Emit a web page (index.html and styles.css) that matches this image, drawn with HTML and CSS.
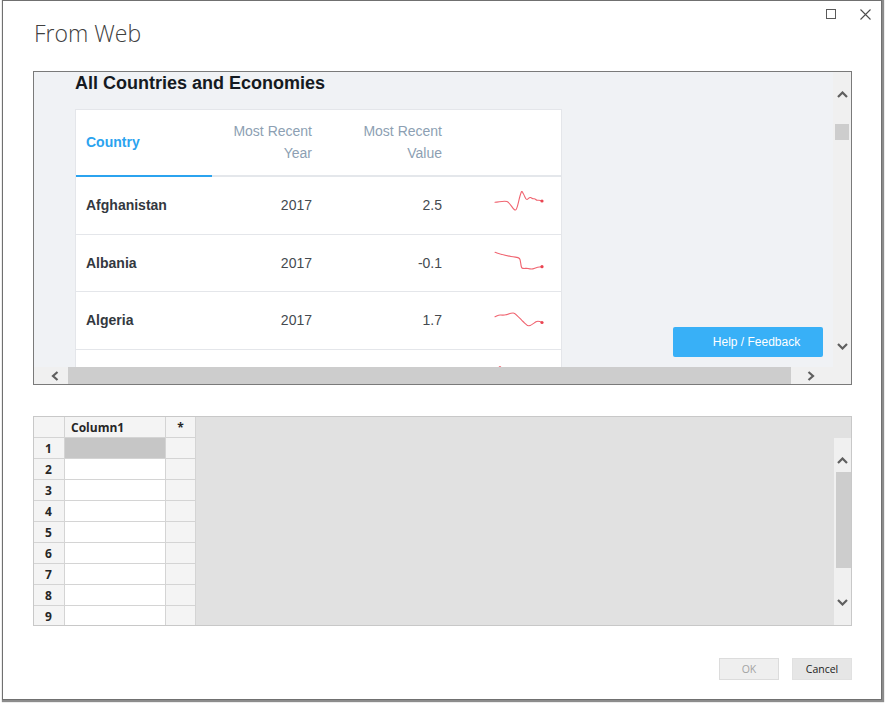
FILE: index.html
```html
<!DOCTYPE html>
<html lang="en">
<head>
<meta charset="utf-8">
<title>From Web</title>
<link rel="stylesheet" href="styles.css">
</head>
<body>
<div class="window">
  <header class="titlebar">
    <h1 class="title">From Web</h1>
    <div class="controls">
      <svg class="ctl" width="10" height="10" viewBox="0 0 10 10"><rect x="0.5" y="0.5" width="9" height="9" fill="none" stroke="#5a5a5a" stroke-width="1"/></svg>
      <svg class="ctl" width="11" height="11" viewBox="0 0 11 11"><path d="M0.5 0.5 L10.5 10.5 M10.5 0.5 L0.5 10.5" fill="none" stroke="#4d4d4d" stroke-width="1.1"/></svg>
    </div>
  </header>

  <div class="content">
    <section class="browser">
      <div class="page">
        <h2 class="page-title">All Countries and Economies</h2>
        <div class="card">
          <div class="trow thead">
            <div class="c-country active">Country</div>
            <div class="c-year">Most Recent<br>Year</div>
            <div class="c-value">Most Recent<br>Value</div>
            <div class="c-spark"></div>
          </div>
          <div class="trow">
            <div class="c-country name">Afghanistan</div>
            <div class="c-year">2017</div>
            <div class="c-value">2.5</div>
            <div class="c-spark">
              <svg width="52" height="30" viewBox="0 0 52 30"><path d="M0,12.3 C5,11.8 9,10.5 12,11.5 S17,18 19.5,19.8 S23,13 25,6 S27,1.5 28.5,4 S30.5,10 32,9.5 S34,7 35.5,7.5 S37.5,9 39,8.7 S41,10.5 42.5,10.3 S45,10 47,11"/><circle cx="47" cy="11" r="1.6"/></svg>
            </div>
          </div>
          <div class="trow">
            <div class="c-country name">Albania</div>
            <div class="c-year">2017</div>
            <div class="c-value">-0.1</div>
            <div class="c-spark">
              <svg width="52" height="30" viewBox="0 0 52 30"><path d="M0,4.3 C4,5.5 10,7.5 16,8.5 S23,9 24.5,10.5 S25.5,19 27,20 S31,20 33,20.5 S37,21.5 39,20.5 S43,18.5 47,18.7"/><circle cx="47" cy="18.7" r="1.6"/></svg>
            </div>
          </div>
          <div class="trow">
            <div class="c-country name">Algeria</div>
            <div class="c-year">2017</div>
            <div class="c-value">1.7</div>
            <div class="c-spark">
              <svg width="52" height="30" viewBox="0 0 52 30"><path d="M0,11.8 C2,11 3.5,9.8 5.5,10 S9,10.3 11,9.8 S17,7.5 19,8.2 S25,13.5 28,16.5 S32,21 34,20.8 S39,18 41,16.8 S45,16.5 47,17.5"/><circle cx="47" cy="17.5" r="1.6"/></svg>
            </div>
          </div>
          <div class="trow">
            <div class="c-country name"></div>
            <div class="c-year"></div>
            <div class="c-value"></div>
            <div class="c-spark">
              <svg width="52" height="30" viewBox="0 0 52 30"><path d="M0,9 C2,7 4,3.5 5,3.5 S8,8 10,10 S20,14 30,15 S42,16 47,15"/><circle cx="47" cy="15" r="1.6"/></svg>
            </div>
          </div>
        </div>
        <button class="help">Help / Feedback</button>
      </div>
      <div class="vscroll">
        <div class="v-up"><svg width="11" height="7" viewBox="0 0 11 7"><polyline points="1,6 5.5,1.5 10,6"/></svg></div>
        <div class="v-thumb"></div>
        <div class="v-fill"></div>
        <div class="v-down"><svg width="11" height="7" viewBox="0 0 11 7"><polyline points="1,1 5.5,5.5 10,1"/></svg></div>
      </div>
      <div class="hscroll">
        <div class="h-left"><svg width="8" height="10" viewBox="0 0 8 10"><polyline points="6.5,1 2,5 6.5,9"/></svg></div>
        <div class="h-thumb"></div>
        <div class="h-right"><svg width="8" height="10" viewBox="0 0 8 10"><polyline points="1.5,1 6,5 1.5,9"/></svg></div>
      </div>
      <div class="corner"></div>
    </section>

    <section class="sheet">
      <div class="sheet-table">
        <div class="srow">
          <div class="s-num"></div><div class="s-col">Column1</div><div class="s-star">*</div>
        </div>
        <div class="srow"><div class="s-num">1</div><div class="s-col selected"></div><div class="s-star"></div></div>
        <div class="srow"><div class="s-num">2</div><div class="s-col"></div><div class="s-star"></div></div>
        <div class="srow"><div class="s-num">3</div><div class="s-col"></div><div class="s-star"></div></div>
        <div class="srow"><div class="s-num">4</div><div class="s-col"></div><div class="s-star"></div></div>
        <div class="srow"><div class="s-num">5</div><div class="s-col"></div><div class="s-star"></div></div>
        <div class="srow"><div class="s-num">6</div><div class="s-col"></div><div class="s-star"></div></div>
        <div class="srow"><div class="s-num">7</div><div class="s-col"></div><div class="s-star"></div></div>
        <div class="srow"><div class="s-num">8</div><div class="s-col"></div><div class="s-star"></div></div>
        <div class="srow"><div class="s-num">9</div><div class="s-col"></div><div class="s-star"></div></div>
      </div>
      <div class="sheet-fill"></div>
      <div class="sheet-scroll">
        <div class="ss-up"><svg width="11" height="7" viewBox="0 0 11 7"><polyline points="1,6 5.5,1.5 10,6"/></svg></div>
        <div class="ss-thumb"></div>
        <div class="ss-fill"></div>
        <div class="ss-down"><svg width="11" height="7" viewBox="0 0 11 7"><polyline points="1,1 5.5,5.5 10,1"/></svg></div>
      </div>
    </section>

    <div class="actions">
      <button class="btn btn-ok" disabled>OK</button>
      <button class="btn btn-cancel">Cancel</button>
    </div>
  </div>
</div>
</body>
</html>
```

FILE: styles.css
```css
* { box-sizing: border-box; }

html, body {
  margin: 0;
  padding: 0;
  background: #ffffff;
}

body {
  width: 886px;
  height: 703px;
  overflow: hidden;
  font-family: "Open Sans", "Noto Sans", sans-serif;
}

.window {
  margin-left: 2px;
  width: 880px;
  height: 700px;
  border: 1px solid #707070;
  background: #ffffff;
  box-shadow: 1px 1px 1px 1px rgba(0, 0, 0, 0.45);
}

/* ---------- title bar ---------- */
.titlebar {
  height: 70px;
  display: flex;
  justify-content: space-between;
  align-items: flex-start;
  padding-left: 31px;
}

.title {
  margin: 16px 0 0;
  font-family: "Open Sans", "Noto Sans", sans-serif;
  font-weight: 300;
  font-size: 23px;
  line-height: 32px;
  color: #404040;
}

.controls {
  display: flex;
  gap: 24px;
  padding-top: 8px;
  margin-right: 10px;
}

.ctl { display: block; }

/* ---------- content ---------- */
.content {
  padding: 0 29px 0 30px;
}

/* ---------- embedded browser ---------- */
.browser {
  height: 314px;
  border: 1px solid #7a7a7a;
  display: grid;
  grid-template-columns: 1fr 18px;
  grid-template-rows: 1fr 17px;
  overflow: hidden;
}

.page {
  position: relative;
  overflow: hidden;
  background: #f0f2f5;
  padding-left: 41px;
  font-family: "Liberation Sans", Arial, sans-serif;
}

.page-title {
  margin: 0;
  font-size: 18px;
  line-height: 22px;
  font-weight: 700;
  color: #151a22;
}

.card {
  margin-top: 15px;
  width: 487px;
  background: #ffffff;
  border: 1px solid #e4e6ea;
}

.trow {
  display: grid;
  grid-template-columns: 136px 111px 130px 108px;
  height: 57.5px;
  border-bottom: 1px solid #e4e6ea;
  align-items: center;
  font-size: 14px;
  color: #454a50;
}

.trow.thead {
  height: 67px;
  border-bottom: none;
  align-items: stretch;
  color: #8d9fb3;
}

.thead > div {
  display: flex;
  align-items: center;
  justify-content: flex-end;
  line-height: 22px;
  padding-bottom: 1px;
  border-bottom: 2px solid #e4e7eb;
  text-align: right;
}

.thead > .c-country {
  justify-content: flex-start;
  text-align: left;
}

.thead > .active {
  color: #2ba3ef;
  font-weight: 700;
  border-bottom-color: #2ba3ef;
}

.c-country { padding-left: 10px; }
.c-year, .c-value { text-align: right; padding-right: 11px; }

.name {
  font-weight: 700;
  color: #333840;
}

.c-spark {
  padding-left: 42px;
  display: flex;
  align-items: center;
}

.c-spark svg { display: block; overflow: visible; }
.c-spark path {
  fill: none;
  stroke: #f06470;
  stroke-width: 1.1;
  stroke-linejoin: round;
  stroke-linecap: round;
}
.c-spark circle { fill: #ea4552; }

.help {
  position: absolute;
  right: 10px;
  bottom: 10px;
  width: 150px;
  height: 30px;
  border: none;
  border-radius: 2px;
  background: #38b0f7;
  color: #ffffff;
  font-family: "Liberation Sans", Arial, sans-serif;
  font-size: 12px;
  padding: 0 0 0 17px;
  text-align: center;
}

/* scrollbars */
.vscroll {
  background: #f0f0f0;
  display: flex;
  flex-direction: column;
  align-items: center;
}

.vscroll polyline,
.hscroll polyline,
.sheet-scroll polyline {
  fill: none;
  stroke: #5f5f5f;
  stroke-width: 2.2;
}

.vscroll svg, .hscroll svg, .sheet-scroll svg { display: block; }

.v-up { padding-top: 19px; }
.v-thumb {
  margin-top: 26px;
  width: 14px;
  height: 16px;
  background: #cdcdcd;
}
.v-fill { flex: 1; }
.v-down { padding-bottom: 17px; }

.hscroll {
  background: #f0f0f0;
  display: flex;
  align-items: center;
}

.h-left {
  width: 34px;
  padding-left: 17px;
}
.h-thumb {
  width: 723px;
  height: 17px;
  background: #cdcdcd;
}
.h-right {
  flex: 1;
  padding-left: 16px;
}

.corner { background: #f0f0f0; }

/* ---------- data sheet ---------- */
.sheet {
  margin-top: 31px;
  height: 210px;
  border: 1px solid #c8c8c8;
  background: #e1e1e1;
  display: flex;
  overflow: hidden;
}

.sheet-table {
  width: 162px;
  flex-shrink: 0;
  font-family: "Open Sans", "Noto Sans", sans-serif;
  font-size: 12px;
  font-weight: 700;
  color: #262626;
}

.srow {
  display: grid;
  grid-template-columns: 31px 101px 30px;
  grid-template-rows: 21px;
  height: 21px;
}

.srow > div {
  height: 21px;
  border-right: 1px solid #d4d4d4;
  border-bottom: 1px solid #d4d4d4;
  line-height: 21px;
}

.s-num {
  background: #f4f4f4;
  padding-left: 11px;
}

.s-col {
  background: #ffffff;
}

.srow:first-child .s-col {
  background: #f4f4f4;
  padding-left: 6px;
}

.s-col.selected { background: #c6c6c6; }

.s-star {
  background: #f4f4f4;
  text-align: center;
}

.sheet-fill { flex: 1; }

.sheet-scroll {
  width: 17px;
  margin-top: 21px;
  background: #f0f0f0;
  display: flex;
  flex-direction: column;
  align-items: center;
}

.ss-up { padding-top: 19px; }
.ss-thumb {
  margin-top: 8px;
  margin-left: 1px;
  width: 15px;
  height: 96px;
  background: #cdcdcd;
}
.ss-fill { flex: 1; }
.ss-down { padding-bottom: 19px; }

/* ---------- buttons ---------- */
.actions {
  margin-top: 32px;
  display: flex;
  justify-content: flex-end;
  gap: 13px;
}

.btn {
  width: 60px;
  height: 22px;
  padding: 0;
  font-family: "Open Sans", "Noto Sans", sans-serif;
  font-size: 10.5px;
  border-radius: 0;
}

.btn-ok {
  background: #efefef;
  border: 1px solid #dcdcdc;
  color: #a3a3a3;
}

.btn-cancel {
  background: #e6e6e6;
  border: 1px solid #e1e1e1;
  color: #222222;
}
```
